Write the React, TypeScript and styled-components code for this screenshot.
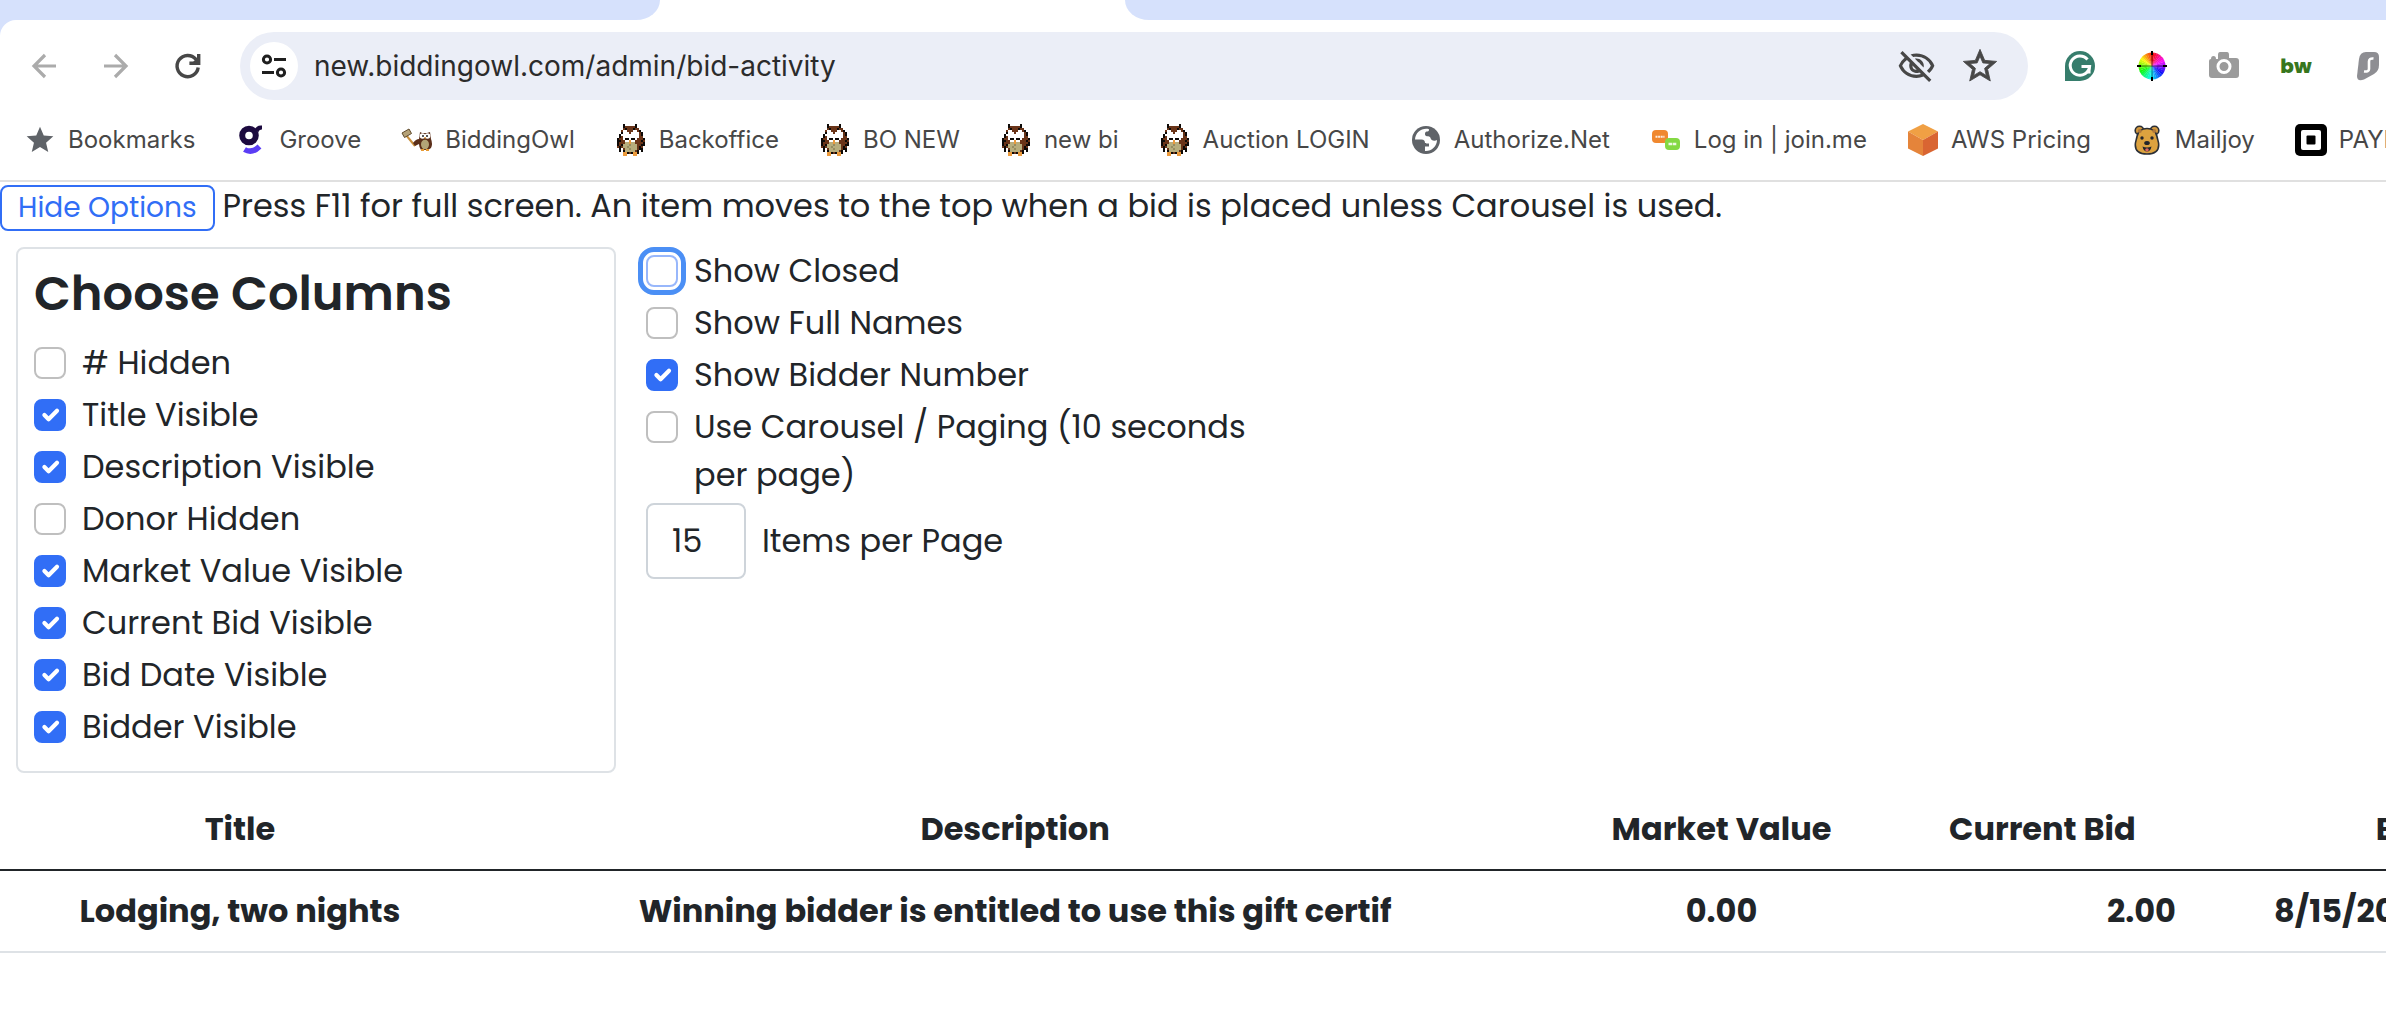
import React, { useState } from 'react';
import styled, { createGlobalStyle, css } from 'styled-components';
import { MdOutlineVisibilityOff, MdStar, MdStarOutline } from 'react-icons/md';

const GlobalStyle = createGlobalStyle`
  *, *::before, *::after { box-sizing: border-box; }
  body {
    margin: 0;
    background: #fff;
    overflow: hidden;
    font-family: Poppins, Inter, "Liberation Sans", sans-serif;
    color: #212529;
  }
  button, input { font: inherit; color: inherit; }
`;

/* ---------- Browser frame ---------- */

const Frame = styled.header`
  font-family: Inter, Roboto, "Liberation Sans", sans-serif;
  background: #d6e1fc;
  border-bottom: 2px solid #e0e0e0;
`;

const TabStrip = styled.div`
  display: flex;
  height: 20px;
  background: #fff;
`;

const TabGap = styled.div<{ $side: 'left' | 'right' }>`
  background: #d6e1fc;
  ${({ $side }) =>
    $side === 'left'
      ? css`
          width: 660px;
          border-bottom-right-radius: 24px 20px;
        `
      : css`
          flex: 1;
          border-bottom-left-radius: 24px 20px;
        `}
`;

const ActiveTab = styled.div`
  width: 465px;
`;

const FrameBody = styled.div`
  background: #fff;
  border-top-left-radius: 16px;
`;

const Toolbar = styled.div`
  display: flex;
  align-items: center;
  padding: 12px 0 0 16px;
`;

const NavButtons = styled.nav`
  display: flex;
  gap: 16px;
  margin-right: 24px;
`;

const IconButton = styled.button<{ $color?: string; $width?: number }>`
  display: flex;
  align-items: center;
  justify-content: center;
  flex: none;
  width: ${({ $width }) => $width ?? 56}px;
  height: 56px;
  padding: 0;
  border: 0;
  background: none;
  color: ${({ $color }) => $color ?? '#474747'};
`;

const Omnibox = styled.div`
  display: flex;
  align-items: center;
  flex: 1;
  min-width: 0;
  height: 68px;
  padding: 0 16px 0 10px;
  border-radius: 34px;
  background: #ebeef7;
`;

const SiteInfo = styled.button`
  display: flex;
  align-items: center;
  justify-content: center;
  width: 48px;
  height: 48px;
  padding: 0;
  border: 0;
  border-radius: 50%;
  background: #fff;
  color: #1f1f1f;
`;

const UrlInput = styled.input`
  flex: 1;
  min-width: 0;
  height: 48px;
  padding: 0 16px;
  border: 0;
  outline: 0;
  background: none;
  color: #2b2b2b;
  font-size: 28px;
`;

const Extensions = styled.div`
  display: flex;
  gap: 24px;
  flex: none;
  width: 330px;
  margin-left: 28px;
  overflow: hidden;
`;

const BwMark = styled.span`
  color: #37761d;
  font-family: Poppins, Inter, sans-serif;
  font-size: 20px;
  font-weight: 800;
  line-height: 28px;
`;

const BookmarkBar = styled.nav`
  display: flex;
  gap: 40px;
  height: 80px;
  padding-left: 24px;
  overflow: hidden;
`;

const BookmarkLink = styled.a`
  display: flex;
  align-items: center;
  gap: 12px;
  flex: none;
  color: #474747;
  font-size: 24px;
  line-height: 32px;
  text-decoration: none;
  white-space: nowrap;
`;

const BookmarkIcon = styled.span`
  display: flex;
  align-items: center;
  justify-content: center;
  width: 32px;
  height: 32px;
`;

/* ---------- Page ---------- */

const Page = styled.main`
  font-size: 32px;
  line-height: 48px;
`;

const Intro = styled.div`
  display: flex;
  align-items: baseline;
  gap: 8px;
  padding: 3px 0 16px;
`;

const OutlineButton = styled.button`
  flex: none;
  height: 46px;
  padding: 0 16px;
  border: 2px solid #316ef6;
  border-radius: 8px;
  background: #fff;
  color: #316ef6;
  font-size: 28px;
  line-height: 40px;
`;

const IntroText = styled.p`
  margin: 0;
  line-height: 40px;
`;

const Options = styled.div`
  display: flex;
  align-items: flex-start;
  gap: 30px;
  padding: 0 16px;
`;

const Panel = styled.fieldset<{ $bordered?: boolean }>`
  flex: 0 1 600px;
  min-width: 0;
  margin: 0;
  padding: 0;
  border: 0;
  ${({ $bordered }) =>
    $bordered &&
    css`
      padding: 16px;
      border: 2px solid #dee2e6;
      border-radius: 8px;
    `}
`;

const PanelTitle = styled.h2`
  margin: 0 0 16px;
  font-size: 48px;
  font-weight: 600;
  line-height: 58px;
`;

const CheckRow = styled.div`
  display: flex;
  align-items: flex-start;
  gap: 16px;
  margin-bottom: 4px;
`;

const tick = encodeURIComponent(
  '<svg xmlns="http://www.w3.org/2000/svg" viewBox="0 0 20 20"><path fill="none" stroke="#fff" stroke-linecap="round" stroke-linejoin="round" stroke-width="3" d="m6 10 3 3 6-6"/></svg>',
);

const Checkbox = styled.input<{ $ring?: boolean }>`
  appearance: none;
  flex: none;
  width: 32px;
  height: 32px;
  margin: 8px 0 0;
  border: 2px solid #bfbfbf;
  border-radius: 8px;
  background: #fff;
  outline: 0;

  &:checked {
    border-color: #316ef6;
    background: #316ef6 url("data:image/svg+xml,${tick}") center / contain no-repeat;
  }

  ${({ $ring }) =>
    $ring &&
    css`
      border-color: #98b7fb;
      outline: 5px solid #4b8ff5;
      outline-offset: 3px;
    `}
`;

const ItemsRow = styled.div`
  display: flex;
  align-items: center;
  gap: 16px;
`;

const NumberBox = styled.input`
  width: 100px;
  height: 76px;
  padding: 0 24px;
  border: 2px solid #ced4da;
  border-radius: 8px;
  background: #fff;
`;

const TableScroll = styled.div`
  margin-top: 16px;
  overflow: hidden;
`;

const BidTable = styled.table`
  width: 113%;
  table-layout: fixed;
  border-collapse: collapse;
  font-weight: 700;
`;

const Col = styled.col<{ $share: number }>`
  width: ${({ $share }) => $share}%;
`;

const HeadCell = styled.th`
  padding: 16px;
  border-bottom: 2px solid #212529;
  white-space: nowrap;
`;

const Cell = styled.td<{ $align?: 'left' | 'center' | 'right' }>`
  padding: 16px ${({ $align }) => ($align === 'left' ? 82 : 16)}px;
  border-bottom: 2px solid #dee2e6;
  text-align: ${({ $align }) => $align ?? 'center'};
  white-space: nowrap;
`;

/* ---------- Icons ---------- */

const BackIcon = () => (
  <svg width="26" height="26" viewBox="0 0 26 26" fill="none" stroke="currentColor" strokeWidth="3.200">
    <path d="M25 13H3M14 2L3 13l11 11" />
  </svg>
);

const ForwardIcon = () => (
  <svg width="26" height="26" viewBox="0 0 26 26" fill="none" stroke="currentColor" strokeWidth="3.200">
    <path d="M1 13h22M12 2l11 11-11 11" />
  </svg>
);

const ReloadIcon = () => (
  <svg width="28" height="28" viewBox="0 0 28 28" fill="none" stroke="currentColor" strokeWidth="3.400">
    <path d="M24.200 15.500A10.600 10.600 0 1 1 21.800 7.200L24 9.600" />
    <path d="M24.700 2v9.300H15.400" />
    <path d="M18 11l6-6v6z" fill="currentColor" stroke="none" />
  </svg>
);

const TuneIcon = () => (
  <svg width="26" height="24" viewBox="0 0 26 24" fill="none" stroke="currentColor" strokeWidth="3">
    <circle cx="6" cy="5.5" r="3.6" />
    <path d="M13 5.5h12M1 18.5h12" />
    <circle cx="20" cy="18.5" r="3.6" />
  </svg>
);

const GrooveIcon = () => (
  <svg width="26" height="30" viewBox="0 0 26 30" fill="none">
    <circle cx="11" cy="10.5" r="6.8" stroke="#1c0a3f" strokeWidth="6" />
    <path d="M17 5q1-5 7-4.500v4q-3-.3-3.500 2.500z" fill="#1c0a3f" />
    <path d="M6.500 24.500Q14 29 21.500 21.500" stroke="#5b3df5" strokeWidth="5.500" />
  </svg>
);

const GavelOwlIcon = () => (
  <svg width="32" height="24" viewBox="0 0 32 24">
    <path d="M5 7l9 11" stroke="#c98f3c" strokeWidth="2" />
    <path d="M1 5l7-4 2.500 4.500-7 4z" fill="#b5a278" stroke="#5f4a2b" strokeWidth="1" />
    <path d="M12 15q3-4 6-4l1-7 2 1h5l3-1 1 7q2 5 0 9l-3 2h-7q-2-3-2-6l-4 2z" fill="#5b2f1a" />
    <circle cx="21.500" cy="8" r="2.800" fill="#fff" />
    <circle cx="26.500" cy="8" r="2.800" fill="#fff" />
    <circle cx="22" cy="8" r="1" fill="#222" />
    <circle cx="26" cy="8" r="1" fill="#222" />
    <path d="M23.200 9h1.800l-.9 2.500z" fill="#e79a33" />
    <ellipse cx="24" cy="16.500" rx="4" ry="4.800" fill="#b3a477" />
    <path d="M20 22h3M25 22h3" stroke="#e79a33" strokeWidth="2" />
  </svg>
);

const owlRows = [
  '...K.....K....',
  '...KBBBBBK....',
  '...BKBBBKBB...',
  '..BWWBBBWWBK..',
  '..KWWWBWWWWBK.',
  '.KWWWWWWWWWBK.',
  '.KBWWWWWWWWBB.',
  'KBBWKKWKKWBBBK',
  'KKBBWWOWWBBBKB',
  'KBBBGGOGGBBBBK',
  'KBKGGGDGGGBBKK',
  'BKBGGDGGGGBKB.',
  '.K.BGGDGGGBKK.',
  '.K.KGGGGGBK.K.',
  '...OOKBKOOK...',
  '...OO...OO....',
];
const owlColors: Record<string, string> = {
  K: '#0d0a08',
  B: '#6a3418',
  W: '#ffffff',
  O: '#eb9a3c',
  G: '#b7ad7c',
  D: '#968c60',
};

const OwlIcon = () => (
  <svg width="28" height="32" viewBox="0 0 14 16" shapeRendering="crispEdges">
    {owlRows.flatMap((row, y) =>
      row.split('').map((c, x) =>
        owlColors[c] ? <rect key={`${x}-${y}`} x={x} y={y} width="1" height="1" fill={owlColors[c]} /> : null,
      ),
    )}
  </svg>
);

const GlobeIcon = () => (
  <svg width="28" height="28" viewBox="0 0 28 28">
    <circle cx="14" cy="14" r="14" fill="#5f6368" />
    <path
      d="M17 3.200C10 1.500 3.300 6.500 3 13.500h6.500c2.500 0 3.500 1.500 3.500 3.500h4v3.500h-4V25c6 .6 12-4.500 12-11-1.500 1-4 1-5.500-.3-1.200-1.200-.8-2.700-2.500-3.200-2-.4-4-.2-4-2.500 0-2 1-2.500 2.500-2.500 1.200 0 1.500-1 1.500-2.300z"
      fill="#fff"
    />
    <path d="M14 17.500h3.500c1.500 0 1.500-3.500 0-3.500h-2z" fill="#fff" />
  </svg>
);

const JoinIcon = () => (
  <svg width="28" height="20" viewBox="0 0 28 20">
    <rect x="0" y="0" width="16" height="13" rx="4" fill="#f0882f" />
    <path d="M3.500 6.700h9" stroke="#fff" strokeOpacity=".85" strokeWidth="2" strokeDasharray="2 .6" />
    <rect x="13" y="8" width="15" height="12" rx="4" fill="#84d943" />
    <path d="M16.500 14h8" stroke="#fff" strokeOpacity=".85" strokeWidth="2.500" strokeDasharray="3.600 .6" />
  </svg>
);

const AwsIcon = () => (
  <svg width="30" height="32" viewBox="0 0 30 32">
    <path d="M15 0l15 7.500-15 8.500L0 7.500z" fill="#f0a044" />
    <path d="M0 7.500L15 16v16L0 24.500z" fill="#e5843a" />
    <path d="M30 7.500L15 16v16l15-7.500z" fill="#d96532" />
  </svg>
);

const BearIcon = () => (
  <svg width="26" height="30" viewBox="0 0 26 30">
    <g stroke="#2b2f36" strokeWidth="1.600">
      <circle cx="5.500" cy="5.500" r="4.300" fill="#d49a3d" />
      <circle cx="20.500" cy="5.500" r="4.300" fill="#d49a3d" />
      <path d="M13 3.500c6 0 9 3 10 8 .5 3 1.700 5 1.700 8.500C24.700 26 20 29 13 29S1.300 26 1.300 20C1.300 16.500 2.500 14.500 3 11.500c1-5 4-8 10-8z" fill="#dca23f" />
    </g>
    <circle cx="5.800" cy="6" r="2" fill="#b0783a" />
    <circle cx="20.200" cy="6" r="2" fill="#b0783a" />
    <circle cx="8" cy="13" r="1.700" fill="#22252b" />
    <circle cx="18" cy="13" r="1.700" fill="#22252b" />
    <ellipse cx="13" cy="18" rx="2.800" ry="2" fill="#22252b" />
    <path d="M8.500 21.500q4.500 2 9 0-1 5-4.500 5t-4.500-5z" fill="#22252b" />
    <ellipse cx="13" cy="24.800" rx="1.800" ry="1.600" fill="#e0665f" />
  </svg>
);

const SquareIcon = () => (
  <svg width="32" height="32" viewBox="0 0 32 32">
    <rect width="32" height="32" rx="5" fill="#000" />
    <rect x="6" y="6" width="20" height="20" rx="2" fill="#fff" />
    <rect x="11.500" y="11.500" width="9" height="9" rx="1" fill="#000" />
  </svg>
);

const GrammarlyIcon = () => (
  <svg width="30" height="30" viewBox="0 0 30 30" fill="none">
    <path d="M15 0a15 15 0 0 1 0 30H0V15A15 15 0 0 1 15 0z" fill="#367d6c" />
    <path d="M22.500 8.500A9.700 9.700 0 1 0 24.600 15.500H16.500" stroke="#fff" strokeWidth="3" />
    <path d="M24.300 15.500v7" stroke="#fff" strokeWidth="2.500" />
  </svg>
);

const wedge = (i: number, n: number) => {
  const point = (k: number) => {
    const a = (k / n) * Math.PI * 2;
    return `${15 + 13.5 * Math.sin(a)} ${15 - 13.5 * Math.cos(a)}`;
  };
  return `M15 15L${point(i)}A13.5 13.5 0 0 1 ${point(i + 1.1)}z`;
};

const WheelIcon = () => (
  <svg width="30" height="30" viewBox="0 0 30 30">
    {Array.from({ length: 36 }, (_, i) => (
      <path key={i} d={wedge(i, 36)} fill={`hsl(${360 - i * 10} 95% 52%)`} />
    ))}
    <path d="M15 0v4M15 26v4M0 15h4M26 15h4" stroke="#000" strokeWidth="2" />
    <path d="M15 4v22M4 15h22" stroke="#000" strokeOpacity=".5" strokeWidth="1" />
  </svg>
);

const CameraIcon = () => (
  <svg width="30" height="28" viewBox="0 0 30 28">
    <path d="M2 7q0-3 2.500-3T7 7h2V3q0-3 2-3h7q2 0 2 3v3h7q3 0 3 3v14q0 3-3 3H3q-3 0-3-3V9q0-2 2-2z" fill="#9b9b9b" />
    <circle cx="15" cy="14.500" r="6" fill="none" stroke="#fff" strokeWidth="3" />
  </svg>
);

const SurfIcon = () => (
  <svg width="24" height="30" viewBox="0 0 24 30">
    <path d="M10 1h8q5 0 5 5v8q0 6-5 9L8 28.500Q1 31 1 25L3 8q1-7 7-7z" fill="#8e8e93" />
    <path d="M17.500 7.500q-4.500-.5-4.500 3v7.500q0 3-5 2.500" fill="none" stroke="#fff" strokeWidth="2.600" />
  </svg>
);

/* ---------- Data ---------- */

const bookmarks: { name: string; icon: React.ReactNode }[] = [
  { name: 'Bookmarks', icon: <MdStar size={32} color="#5f6368" /> },
  { name: 'Groove', icon: <GrooveIcon /> },
  { name: 'BiddingOwl', icon: <GavelOwlIcon /> },
  { name: 'Backoffice', icon: <OwlIcon /> },
  { name: 'BO NEW', icon: <OwlIcon /> },
  { name: 'new bi', icon: <OwlIcon /> },
  { name: 'Auction LOGIN', icon: <OwlIcon /> },
  { name: 'Authorize.Net', icon: <GlobeIcon /> },
  { name: 'Log in | join.me', icon: <JoinIcon /> },
  { name: 'AWS Pricing', icon: <AwsIcon /> },
  { name: 'Mailjoy', icon: <BearIcon /> },
  { name: 'PAYROLL', icon: <SquareIcon /> },
];

const extensions: { name: string; icon: React.ReactNode }[] = [
  { name: 'Grammarly', icon: <GrammarlyIcon /> },
  { name: 'Color picker', icon: <WheelIcon /> },
  { name: 'Screenshot', icon: <CameraIcon /> },
  { name: 'BuiltWith', icon: <BwMark>bw</BwMark> },
  { name: 'Surfshark', icon: <SurfIcon /> },
];

const columns = [
  { name: '#', visible: false },
  { name: 'Title', visible: true },
  { name: 'Description', visible: true },
  { name: 'Donor', visible: false },
  { name: 'Market Value', visible: true },
  { name: 'Current Bid', visible: true },
  { name: 'Bid Date', visible: true },
  { name: 'Bidder', visible: true },
];

const displayOptions = [
  { name: 'Show Closed', on: false, ring: true },
  { name: 'Show Full Names', on: false },
  { name: 'Show Bidder Number', on: true },
  { name: 'Use Carousel / Paging (10 seconds per page)', on: false },
];

const CheckOption = ({ id, label, on, ring }: { id: string; label: string; on: boolean; ring?: boolean }) => {
  const [checked, setChecked] = useState(on);
  return (
    <CheckRow>
      <Checkbox id={id} type="checkbox" checked={checked} $ring={ring} onChange={(e) => setChecked(e.target.checked)} />
      <label htmlFor={id}>{label}</label>
    </CheckRow>
  );
};

export default function App() {
  return (
    <>
      <GlobalStyle />
      <Frame>
        <TabStrip>
          <TabGap $side="left" />
          <ActiveTab />
          <TabGap $side="right" />
        </TabStrip>
        <FrameBody>
          <Toolbar>
            <NavButtons>
              <IconButton aria-label="Back" $color="#ababab"><BackIcon /></IconButton>
              <IconButton aria-label="Forward" $color="#ababab"><ForwardIcon /></IconButton>
              <IconButton aria-label="Reload"><ReloadIcon /></IconButton>
            </NavButtons>
            <Omnibox>
              <SiteInfo aria-label="Site information"><TuneIcon /></SiteInfo>
              <UrlInput aria-label="Address" defaultValue="new.biddingowl.com/admin/bid-activity" />
              <IconButton aria-label="Third-party cookies blocked" $width={64}><MdOutlineVisibilityOff size={39} /></IconButton>
              <IconButton aria-label="Bookmark this tab" $width={64}>
                <MdStarOutline size={40} stroke="currentColor" strokeWidth={0.5} />
              </IconButton>
            </Omnibox>
            <Extensions>
              {extensions.map((e) => (
                <IconButton key={e.name} aria-label={e.name} $width={48}>{e.icon}</IconButton>
              ))}
            </Extensions>
          </Toolbar>
          <BookmarkBar aria-label="Bookmarks">
            {bookmarks.map((b) => (
              <BookmarkLink key={b.name} href="#">
                <BookmarkIcon>{b.icon}</BookmarkIcon>
                {b.name}
              </BookmarkLink>
            ))}
          </BookmarkBar>
        </FrameBody>
      </Frame>

      <Page>
        <Intro>
          <OutlineButton>Hide Options</OutlineButton>
          <IntroText>
            Press F11 for full screen. An item moves to the top when a bid is placed unless Carousel is used.
          </IntroText>
        </Intro>

        <Options>
          <Panel $bordered aria-label="Choose Columns">
            <PanelTitle>Choose Columns</PanelTitle>
            {columns.map((c, i) => (
              <CheckOption key={c.name} id={`column-${i}`} on={c.visible} label={`${c.name} ${c.visible ? 'Visible' : 'Hidden'}`} />
            ))}
          </Panel>
          <Panel aria-label="Display options">
            {displayOptions.map((o, i) => (
              <CheckOption key={o.name} id={`display-${i}`} on={o.on} ring={o.ring} label={o.name} />
            ))}
            <ItemsRow>
              <NumberBox id="items-per-page" type="text" inputMode="numeric" defaultValue="15" />
              <label htmlFor="items-per-page">Items per Page</label>
            </ItemsRow>
          </Panel>
        </Options>

        <TableScroll>
          <BidTable>
            <colgroup>
              <Col $share={17.8} />
              <Col $share={39.7} />
              <Col $share={12.7} />
              <Col $share={11.1} />
              <Col $share={18.7} />
            </colgroup>
            <thead>
              <tr>
                <HeadCell>Title</HeadCell>
                <HeadCell>Description</HeadCell>
                <HeadCell>Market Value</HeadCell>
                <HeadCell>Current Bid</HeadCell>
                <HeadCell>Bid Date</HeadCell>
              </tr>
            </thead>
            <tbody>
              <tr>
                <Cell>Lodging, two nights</Cell>
                <Cell>Winning bidder is entitled to use this gift certif</Cell>
                <Cell>0.00</Cell>
                <Cell $align="right">2.00</Cell>
                <Cell $align="left">8/15/2024</Cell>
              </tr>
            </tbody>
          </BidTable>
        </TableScroll>
      </Page>
    </>
  );
}
